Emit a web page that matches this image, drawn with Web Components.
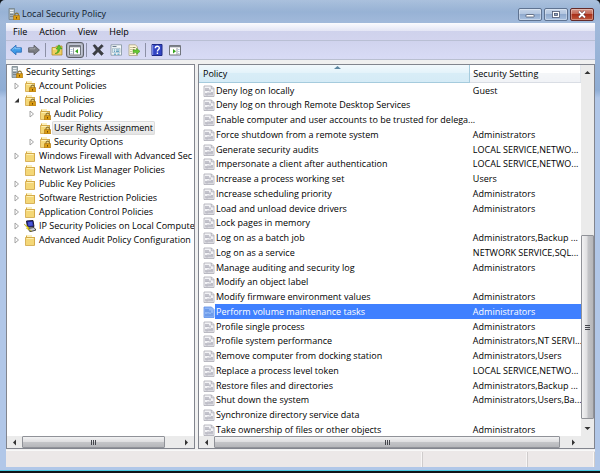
<!DOCTYPE html>
<html lang="en">
<head>
<meta charset="utf-8">
<title>Local Security Policy</title>
<style>
html, body { height: 100%; margin: 0; }
body { background: #101418; font: 9px/14px "Open Sans", "Noto Sans", sans-serif; color: #000; overflow: hidden; }
</style>
</head>
<body>
<mmc-window></mmc-window>
<script>
const FOLDER = '<path d="M2 1.5h4l1 1.5h4v8H2z" fill="#d9a93a"/><path d="M1.5 3.5h9v8h-9z" fill="#f4d777" stroke="#cfa445" stroke-width=".8"/><path d="M3 1h5v2H3z" fill="#fbf0bd"/><path d="M2.5 4.5h7" stroke="#fdf0b5"/>';
const LOCK = '<path d="M7 8V6.8a1.7 1.7 0 0 1 3.4 0V8" fill="none" stroke="#8b7434" stroke-width="1.1"/><path d="M5.5 7.6h6.2V12H5.5z" fill="#d99c14" stroke="#a86f0c" stroke-width=".6"/><path d="M8.5 9v1.6" stroke="#6e4605"/>';
const ICONS = {
  folder: FOLDER,
  locked: FOLDER + LOCK,
  server: '<path d="M1 .5h5.5v11H1z" fill="#a9b4ba" stroke="#6f7c83" stroke-width=".7"/><path d="M2 2.5h3.5M2 4.5h3.5" stroke="#eef3f5"/><path d="M2 6.5h3.5M2 8.5h3.5" stroke="#66737a" stroke-width=".7"/>' + LOCK,
  ipsec: '<path d="M2.5 1 9 .5l1 6-6.5.8z" fill="#20209a" stroke="#1c1c38"/><path d="M3.8 2.2 8.2 1.8l.6 3.7-4.2.5z" fill="#4a58d8"/><path d="M4 8.5l6-1 2 2.5-6 1.8z" fill="#c9ccd6" stroke="#222" stroke-width=".8"/><path d="M0 4l5 3.5L4.3 8.3 8 11.5 2.5 8.5 3 7.5z" fill="#ffe81c" stroke="#9c8d00" stroke-width=".4"/>',
  policy: '<path d="M1 1h7.5L11 3.5V11.5H1z" fill="#f3f3f6" stroke="#aaaab4" stroke-width=".8"/><path d="M8.3 1v2.8H11" fill="none" stroke="#aaaab4" stroke-width=".8"/><path d="M3 3v3M5 3v3M7 4.5v2M3 8v2.5M5 7.5v3M7 8v2.5M9 7v3.5" stroke="#9a9aa8" stroke-width="1.1"/><path d="M2.5 5.5h3M6 8h3.5M3 10h2" stroke="#b5b5c0" stroke-width=".7"/>',
  chosen: '<path d="M1 1h7.5L11 3.5V11.5H1z" fill="#8fb6f5" stroke="#5a8ee8" stroke-width=".8"/><path d="M3 3v3M5 3v3M7 4.5v2M3 8v2.5M5 7.5v3M7 8v2.5M9 7v3.5" stroke="#5386e0" stroke-width="1.1"/>',
  back: '<path d="M.6 6 6 1.2V3.8h5.4v4.4H6v2.6z" fill="#3f9be6" stroke="#2568b8" stroke-width=".8"/><path d="M2.5 5.7 5.3 3.2v1.5h5.2" fill="none" stroke="#9bd2fa" stroke-width=".8"/>',
  forward: '<path d="M11.4 6 6 1.2V3.8H.6v4.4H6v2.6z" fill="#7b7d82" stroke="#56585d" stroke-width=".8"/><path d="M1.5 4.8h5.3V3.3" fill="none" stroke="#b4b6ba" stroke-width=".8"/>',
  up: '<path d="M1 3.5h3.5l1-1.5H11v9H1z" fill="#f0cf62" stroke="#b48d28" stroke-width=".8"/><path d="M2 5h8.5" stroke="#fff0b0"/><path d="M4 9.5c2.5-.5 3-2 2.8-4.5H5L8 .8 11 5H8.7c0 3-1.7 4.8-4.7 4.5z" fill="#5cc42c" stroke="#2f8a12" stroke-width=".5"/>',
  tree: '<path d="M.5 1.5h11v9.5H.5z" fill="#fff" stroke="#71757d"/><path d="M1 2.5h10" stroke="#7d828b" stroke-width="1.6"/><path d="M4.5 4v7" stroke="#9a9da5"/><path d="M1.5 5.5h2M1.5 7.5h2M1.5 9.5h2" stroke="#9db5d6" stroke-width=".8"/><path d="M9 5v4.5L6 7.2z" fill="#35a41c"/>',
  remove: '<path d="M1 1.5 3 .6 6 4 9.5.6 11.4 2 7.8 5.8 11.5 9.5 9.5 11.5 6 7.8 2.5 11.5.5 9.7 4.2 6z" fill="#3c3e43" stroke="#222428" stroke-width=".4"/>',
  props: '<path d="M1 .8h10.5v10.4H1z" fill="#f8fbfc" stroke="#7f919c" stroke-width=".8"/><path d="M2.5 2.5h4" stroke="#6d7f92"/><path d="M2.5 4.3h7.5v4.4H2.5z" fill="#dcebf1" stroke="#8eaabb" stroke-width=".6"/><path d="M4 6h1M6 6h3M4 7.5h1M6 7.5h3" stroke="#4a8fb5" stroke-width=".8"/><path d="M4 10.2h2M7.5 10.2h2" stroke="#3996c4"/>',
  exportlist: '<path d="M1 .8h6.5L9.5 3v8.5H1z" fill="#fff8d8" stroke="#a9a283" stroke-width=".8"/><path d="M2.5 3.5h1M4.5 3.5h3M2.5 5.5h1M4.5 5.5h2M2.5 7.5h1M2.5 9.5h1M4.5 9.5h2" stroke="#77724d" stroke-width=".8"/><path d="M5 6h3.5V4.2L12 7.3 8.5 10.4V8.6H5z" fill="#66c832" stroke="#348d17" stroke-width=".5"/>',
  help: '<path d="M1 .5h10v11H1z" fill="#3346c4" stroke="#1e2a87"/><path d="M1.7 1v10" stroke="#8c9bee"/><path d="M4.3 4.2C4.3 1.6 8.4 1.7 8.3 4.1 8.2 5.5 6.4 5.6 6.4 7.5M6.4 8.6v1.5" fill="none" stroke="#fff" stroke-width="1.4"/>',
  action: '<path d="M.5 1.5h11v9.5H.5z" fill="#fff" stroke="#71757d"/><path d="M1 2.5h10" stroke="#7d828b" stroke-width="1.6"/><path d="M8 4v7" stroke="#9a9da5"/><path d="M9 5.5h1.5M9 7.5h1.5M9 9.5h1.5" stroke="#9db5d6" stroke-width=".8"/><path d="M4 5v4.5L7 7.2z" fill="#35a41c"/>'
};

class MmcIcon extends HTMLElement {
  connectedCallback() {
    if (this.shadowRoot) return;
    this.attachShadow({ mode: 'open' }).innerHTML = `<style>
      :host { display: block; width: 12px; height: 12px; flex: none; }
      svg { display: block; width: 100%; height: 100%; }
    </style><svg viewBox="0 0 12 12" aria-hidden="true">${ICONS[this.getAttribute('name')]}</svg>`;
  }
}
customElements.define('mmc-icon', MmcIcon);

class MmcTitlebar extends HTMLElement {
  connectedCallback() {
    this.attachShadow({ mode: 'open' }).innerHTML = `<style>
      :host { display: flex; align-items: center; gap: 2px; height: 22px; padding: 0 1px 0 2px; }
      h1 { flex: 1; margin: 0; padding-top: 4px; font: inherit; color: #101a2c; }
      mmc-icon { margin-top: 4px; }
      .ctl { display: flex; gap: 2px; padding-top: 4px; }
      button { width: 24px; height: 13px; padding: 0; display: grid; place-items: center; border: 1px solid #5f7391; border-radius: 2px;
        background: linear-gradient(#c6d5e9, #b0c4df 50%, #90aace 50%, #a9c1e0); box-shadow: inset 0 0 0 1px #ffffff55; }
      .close { background: linear-gradient(#d4988c, #c2614d 50%, #a9301a 50%, #c0583c); border-color: #642a28; }
      svg { display: block; }
    </style>
    <mmc-icon name="server"></mmc-icon><h1><slot></slot></h1>
    <div class="ctl">
      <button aria-label="Minimize"><svg width="10" height="9"><rect x="1" y="4.5" width="8" height="2.5" rx=".5" fill="#fff" stroke="#4c5870" stroke-width=".8"/></svg></button>
      <button aria-label="Maximize"><svg width="10" height="9"><rect x="1.5" y="1.5" width="7" height="6" fill="#fff" stroke="#4c5870" stroke-width=".8"/><rect x="3.5" y="3.5" width="3" height="2" fill="#8ba1c4" stroke="#4c5870" stroke-width=".8"/></svg></button>
      <button class="close" aria-label="Close"><svg width="10" height="9"><path d="M2 1.5 8 7.5M8 1.5 2 7.5" stroke="#5d3038" stroke-width="3"/><path d="M2 1.5 8 7.5M8 1.5 2 7.5" stroke="#fff" stroke-width="1.8"/></svg></button>
    </div>`;
  }
}
customElements.define('mmc-titlebar', MmcTitlebar);

class MmcMenubar extends HTMLElement {
  connectedCallback() {
    this.attachShadow({ mode: 'open' }).innerHTML = `<style>
      :host { display: flex; align-items: center; height: 17px; padding-left: 1px; background: linear-gradient(#fbfbfe, #e4e6f5 45%, #cfd2ec 50%, #d2d4ee); border-bottom: 1px solid #b9bfd4; }
      button { font: inherit; color: inherit; border: 0; background: none; padding: 0 6px; line-height: 15px; }
    </style>` + ['File', 'Action', 'View', 'Help'].map(t => `<button>${t}</button>`).join('');
  }
}
customElements.define('mmc-menubar', MmcMenubar);

class MmcToolbar extends HTMLElement {
  connectedCallback() {
    const items = [['back', 'Back'], ['forward', 'Forward'], null, ['up', 'Up one level'], ['tree', 'Show console tree'], null, ['remove', 'Delete'], ['props', 'Properties'], ['exportlist', 'Export list'], null, ['help', 'Help'], ['action', 'Show action pane']];
    this.attachShadow({ mode: 'open' }).innerHTML = `<style>
      :host { display: flex; align-items: center; height: 18px; padding: 0 1px; background: linear-gradient(#d0d3ee, #d8dbf5); border-bottom: 1px solid #b9bfd0; }
      button { display: grid; place-items: center; width: 18px; height: 16px; padding: 0; border: 1px solid transparent; background: none; border-radius: 3px; }
      button[aria-pressed=true] { border-color: #5c5f68; background: #c6cad8; box-shadow: inset 0 0 2px #6d707a; }
      hr { width: 1px; height: 14px; margin: 0 2px; border: 0; background: #8c90a6; }
    </style>` + items.map(i => i ? `<button aria-label="${i[1]}"${i[0] === 'tree' ? ' aria-pressed="true"' : ''}><mmc-icon name="${i[0]}"></mmc-icon></button>` : '<hr>').join('');
  }
}
customElements.define('mmc-toolbar', MmcToolbar);

class MmcScrollbar extends HTMLElement {
  connectedCallback() {
    const v = this.hasAttribute('vertical');
    this.attachShadow({ mode: 'open' }).innerHTML = `<style>
      :host { display: flex; flex-direction: ${v ? 'column' : 'row'}; background: #ebebeb; min-width: 0; min-height: 0; ${v ? 'width' : 'height'}: ${v ? 13 : 12}px; flex: none; }
      button { flex: none; width: ${v ? 13 : 15}px; height: ${v ? 15 : 12}px; padding: 0; border: 0; background: none; display: grid; place-items: center; }
      .track { flex: 1; display: flex; flex-direction: inherit; min-width: 0; min-height: 0; }
      .before { flex: var(--before, 0); }
      .thumb { flex: var(--size, 1); display: grid; place-items: center; border: 1px solid #909298; border-radius: 1px;
        background: linear-gradient(${v ? 'to right' : 'to bottom'}, #f2f2f3, #dedee0 48%, #c4c5c8 52%, #b5b6ba); }
      .after { flex: var(--after, 0); }
      svg { display: block; }
    </style>
    <button aria-label="${v ? 'Scroll up' : 'Scroll left'}"><svg width="7" height="7"><path d="${v ? 'M.5 5 3.5 2l3 3z' : 'M5 .5 2 3.5l3 3z'}" fill="#333"/></svg></button>
    <div class="track"><div class="before"></div><div class="thumb"><svg width="7" height="7"><path d="${v ? 'M1 1.5h5M1 3.5h5M1 5.5h5' : 'M1.5 1v5M3.5 1v5M5.5 1v5'}" stroke="#44464c"/></svg></div><div class="after"></div></div>
    <button aria-label="${v ? 'Scroll down' : 'Scroll right'}"><svg width="7" height="7"><path d="${v ? 'M.5 2 3.5 5l3-3z' : 'M2 .5 5 3.5l-3 3z'}" fill="#333"/></svg></button>`;
  }
}
customElements.define('mmc-scrollbar', MmcScrollbar);

class MmcTree extends HTMLElement {
  connectedCallback() {
    const rows = [
      [0, '', 'server', 'Security Settings'], [1, 'c', 'locked', 'Account Policies'], [1, 'o', 'locked', 'Local Policies'],
      [2, 'c', 'locked', 'Audit Policy'], [2, '', 'locked', 'User Rights Assignment', 1], [2, 'c', 'locked', 'Security Options'],
      [1, 'c', 'folder', 'Windows Firewall with Advanced Sec'], [1, '', 'folder', 'Network List Manager Policies'],
      [1, 'c', 'folder', 'Public Key Policies'], [1, 'c', 'folder', 'Software Restriction Policies'],
      [1, 'c', 'folder', 'Application Control Policies'], [1, 'c', 'ipsec', 'IP Security Policies on Local Compute'],
      [1, 'c', 'folder', 'Advanced Audit Policy Configuration']];
    const arrow = s => !s ? '<span class="tw"></span>' : `<button class="tw" aria-label="${s === 'o' ? 'Collapse' : 'Expand'}"><svg width="7" height="8">${s === 'o' ? '<path d="M6 2v4.5H1.5z" fill="#333"/>' : '<path d="M2 1v6l3.5-3z" fill="#fff" stroke="#9a9a9a" stroke-width=".9"/>'}</svg></button>`;
    this.attachShadow({ mode: 'open' }).innerHTML = `<style>
      :host { display: flex; flex-direction: column; min-width: 0; min-height: 0; background: #fff; border: 1px solid #82858e; }
      ul { flex: 1; margin: 0; padding: 0; list-style: none; overflow: hidden; min-height: 0; }
      li { display: flex; align-items: center; height: 14px; white-space: nowrap; }
      .l0 { padding-left: 4px; } .l1 { padding-left: 5px; } .l2 { padding-left: 20px; }
      .l0 .tw { display: none; }
      .tw { flex: none; width: 8px; height: 12px; margin-right: 4px; padding: 0; border: 0; background: none; display: grid; place-items: center; }
      .t { padding: 0 0 0 2px; margin-left: 1px; line-height: 14px; }
      .sel { padding-right: 2px; background: linear-gradient(#f8f8f8, #e3e3e3); border-radius: 2px; box-shadow: 0 0 0 1px #dcdcdc inset; }
      mmc-scrollbar { --before: 0; --size: 144; --after: 14; }
    </style>
    <ul role="tree" aria-label="Console tree">${rows.map(r => `<li role="treeitem" class="l${r[0]}"${r[4] ? ' aria-selected="true"' : ''}>${arrow(r[1])}<mmc-icon name="${r[2]}"></mmc-icon><span class="t${r[4] ? ' sel' : ''}">${r[3]}</span></li>`).join('')}</ul>
    <mmc-scrollbar></mmc-scrollbar>`;
  }
}
customElements.define('mmc-tree', MmcTree);

class MmcPolicyList extends HTMLElement {
  connectedCallback() {
    const A = 'Administrators', N = 'LOCAL SERVICE,NETWO...';
    const rows = [['Deny log on locally', 'Guest'], ['Deny log on through Remote Desktop Services', ''],
      ['Enable computer and user accounts to be trusted for delega...', ''], ['Force shutdown from a remote system', A],
      ['Generate security audits', N], ['Impersonate a client after authentication', N], ['Increase a process working set', 'Users'],
      ['Increase scheduling priority', A], ['Load and unload device drivers', A], ['Lock pages in memory', ''],
      ['Log on as a batch job', 'Administrators,Backup ...'], ['Log on as a service', 'NETWORK SERVICE,SQL...'],
      ['Manage auditing and security log', A], ['Modify an object label', ''], ['Modify firmware environment values', A],
      ['Perform volume maintenance tasks', A], ['Profile single process', A], ['Profile system performance', 'Administrators,NT SERVI...'],
      ['Remove computer from docking station', 'Administrators,Users'], ['Replace a process level token', N],
      ['Restore files and directories', 'Administrators,Backup ...'], ['Shut down the system', 'Administrators,Users,Ba...'],
      ['Synchronize directory service data', ''], ['Take ownership of files or other objects', A]];
    this.attachShadow({ mode: 'open' }).innerHTML = `<style>
      :host { display: flex; flex-direction: column; min-width: 0; min-height: 0; background: #fff; border: 1px solid #82858e; }
      .body { flex: 1; display: flex; min-height: 0; }
      .view { flex: 1; min-width: 0; overflow: hidden; }
      table { width: 100%; border-collapse: collapse; table-layout: fixed; }
      .c1 { width: 71%; }
      th { position: relative; height: 17px; padding: 0 4px; text-align: left; font-weight: inherit; background: linear-gradient(#fff, #fff 45%, #f4f6f8 50%, #f0f2f6); border-bottom: 1px solid #d9dde4; border-right: 1px solid #e2e6ec; }
      th:first-child { background: linear-gradient(#f2f9fd, #e4f3fa 45%, #d8edf7 50%, #d5ebf6); border-color: #a5cbdd; }
      th svg { position: absolute; top: 0; left: 50%; }
      th:last-child { padding-left: 3px; }
      td { height: 15px; padding: 0 0 0 4px; line-height: 14px; white-space: nowrap; }
      td:last-child { padding-left: 3px; }
      tbody tr:nth-child(4n+2) td { height: 14px; }
      .n { display: flex; align-items: center; gap: 1px; }
      .n span { flex: 1; min-width: 0; }
      tr.sel td { color: #fff; background: #3f80ff; }
      tr.sel td:first-child { background: linear-gradient(to right, #fff 16px, #3f80ff 16px); }
      .foot { display: flex; }
      .foot mmc-scrollbar { flex: 1; --before: 0; --size: 346; --after: 6; }
      .body mmc-scrollbar { --before: 156; --size: 183; --after: 2; }
      .pad { width: 13px; background: #ebebeb; }
    </style>
    <div class="body"><div class="view"><table>
      <colgroup><col class="c1"><col></colgroup>
      <thead><tr><th scope="col" aria-sort="ascending">Policy<svg width="7" height="4" aria-hidden="true"><path d="M0 4 3.5 1 7 4z" fill="#5d86a0"/></svg></th><th scope="col">Security Setting</th></tr></thead>
      <tbody>${rows.map((r, i) => `<tr${i === 15 ? ' class="sel" aria-selected="true"' : ''}><td><div class="n"><mmc-icon name="${i === 15 ? 'chosen' : 'policy'}"></mmc-icon><span>${r[0]}</span></div></td><td>${r[1]}</td></tr>`).join('')}</tbody>
    </table></div><mmc-scrollbar vertical></mmc-scrollbar></div>
    <div class="foot"><mmc-scrollbar></mmc-scrollbar><div class="pad"></div></div>`;
  }
}
customElements.define('mmc-policy-list', MmcPolicyList);

class MmcStatusbar extends HTMLElement {
  connectedCallback() {
    this.attachShadow({ mode: 'open' }).innerHTML = `<style>
      :host { display: flex; height: 17px; padding: 1px 0 0; background: #ece8e8; border-top: 1px solid #f8f8f8; box-sizing: border-box; }
      div { border-right: 1px solid #cfcccc; box-shadow: inset -1px 0 #f8f6f6; }
      .m { flex: 417; } .g { flex: 104; } .s { flex: 66; }
    </style><div class="m"></div><div class="g"></div><div class="s"></div>`;
  }
}
customElements.define('mmc-statusbar', MmcStatusbar);

class MmcWindow extends HTMLElement {
  connectedCallback() {
    this.attachShadow({ mode: 'open' }).innerHTML = `<style>
      :host { display: grid; grid-template-rows: auto minmax(0, 1fr); box-sizing: border-box; height: calc(100vh - 2px); padding: 1px 5px 3px 6px;
        background: linear-gradient(#ffffff44, transparent 12px) top / 100% 22px no-repeat, linear-gradient(#8caad0, #a1b9da 22px, #8fadd4 90px, #b1c7e8 98px);
        border-bottom: 1px solid #48c8e0; border-radius: 5px 5px 0 0; }
      .client { display: grid; grid-template-rows: auto auto minmax(0, 1fr) auto; background: #f0f0f0; min-width: 0; }
      .panes { display: grid; grid-template-columns: 189fr 397fr; grid-template-rows: minmax(0, 1fr); gap: 3px; padding: 4px 0 1px; min-height: 0; }
    </style>
    <mmc-titlebar>Local Security Policy</mmc-titlebar>
    <div class="client"><mmc-menubar></mmc-menubar><mmc-toolbar></mmc-toolbar>
      <div class="panes"><mmc-tree></mmc-tree><mmc-policy-list></mmc-policy-list></div>
      <mmc-statusbar></mmc-statusbar></div>`;
  }
}
customElements.define('mmc-window', MmcWindow);
</script>
</body>
</html>
